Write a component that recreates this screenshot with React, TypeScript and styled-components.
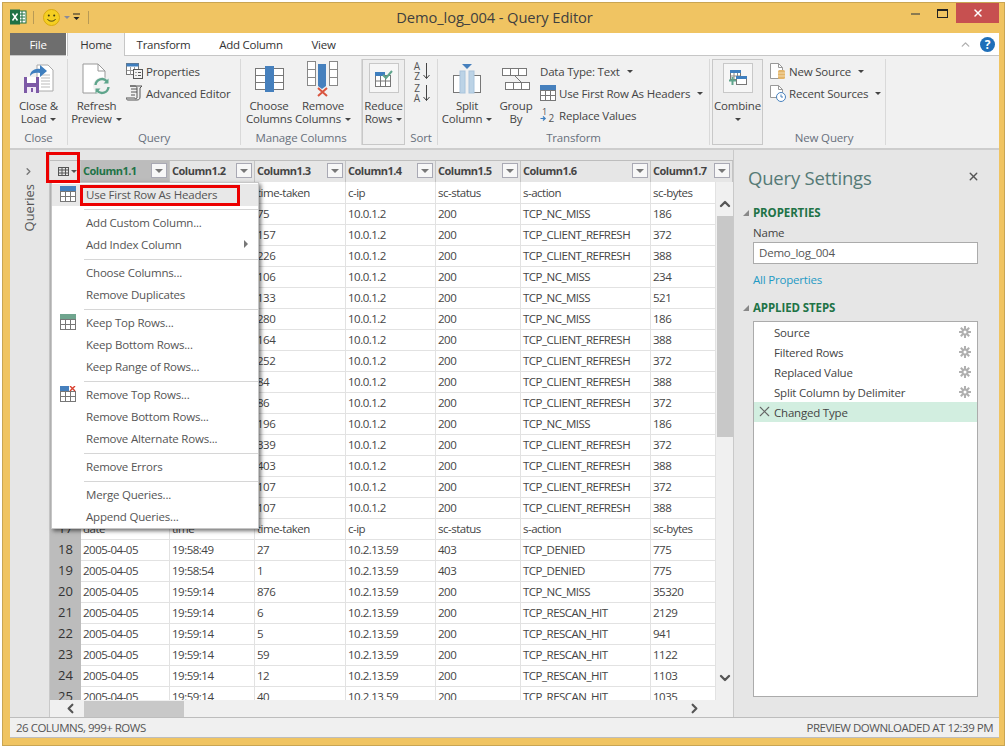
import React from "react"
import styled, { createGlobalStyle } from "styled-components"
import { ChevronUp, ChevronDown, ChevronLeft, ChevronRight, X } from "lucide-react"

const FONT = `"Open Sans", "Noto Sans", "Liberation Sans", sans-serif`

const GlobalStyle = createGlobalStyle`
  html, body { margin: 0; padding: 0; background: #fff; }
  body { font-family: ${FONT}; font-size: 11.5px; letter-spacing: -0.2px; color: #444; overflow: hidden; }
  * { box-sizing: border-box; }
`

/* ---------- frame ---------- */
const Window = styled.div`
  width: 1003px;
  height: 744px;
  margin: 2px 0 0 2px;
  padding: 0 5px 7px 7px;
  background: #f0c462;
  border: 1px solid #c9a553;
  display: flex;
  flex-direction: column;
`
const TitleBar = styled.div`
  height: 30px;
  flex: none;
  display: flex;
  align-items: flex-start;
  position: relative;
`
const QuickAccess = styled.div`
  display: flex;
  align-items: center;
  height: 30px;
  padding-bottom: 2px;
`
const QuickSep = styled.div`
  width: 1px;
  height: 13px;
  background: #b89a55;
  margin: 0 9px 0 6px;
`
const CustomizeSlot = styled.div`
  margin: 0 0 0 2px;
  line-height: 0;
`
const WindowTitle = styled.div`
  position: absolute;
  left: 0;
  right: 0;
  top: 4px;
  text-align: center;
  font-size: 14.7px;
  letter-spacing: -0.1px;
  color: #3f3f3f;
  padding-right: 20px;
`
const WindowButtons = styled.div`
  margin-left: auto;
  display: flex;
  align-items: center;
  height: 20px;
`
const CtrlButton = styled.div`
  width: 27px;
  height: 20px;
  display: flex;
  align-items: center;
  justify-content: center;
`
const CloseButton = styled.div`
  width: 43px;
  height: 20px;
  background: #c75050;
  color: #fff;
  display: flex;
  align-items: center;
  justify-content: center;
`

/* ---------- tabs ---------- */
const TabStrip = styled.div`
  height: 23px;
  flex: none;
  background: #fff;
  display: flex;
  align-items: stretch;
  position: relative;
  letter-spacing: -0.25px;
`
const FileTab = styled.div`
  width: 56px;
  background: #6e6e6e;
  color: #fff;
  display: flex;
  align-items: center;
  justify-content: center;
  border-bottom: 1px solid #c6c6c6;
  margin-right: 1px;
`
const Tab = styled.div<{ $active?: boolean; $w: number }>`
  width: ${p => p.$w}px;
  display: flex;
  align-items: center;
  justify-content: center;
  color: #333;
  border-bottom: ${p => (p.$active ? "none" : "1px solid #c6c6c6")};
  border-left: ${p => (p.$active ? "1px solid #c6c6c6" : "none")};
  border-right: ${p => (p.$active ? "1px solid #c6c6c6" : "none")};
  background: ${p => (p.$active ? "#f1f1f1" : "#fff")};
`
const TabFill = styled.div`
  flex: 1;
  border-bottom: 1px solid #c6c6c6;
  display: flex;
  align-items: center;
  justify-content: flex-end;
  padding-right: 4px;
  gap: 8px;
  color: #b0b0b0;
`
const HelpDot = styled.div`
  width: 15px;
  height: 15px;
  border-radius: 50%;
  background: #1f6fb9;
  color: #fff;
  font-weight: 700;
  font-size: 12px;
  line-height: 15px;
  text-align: center;
`

/* ---------- ribbon ---------- */
const Ribbon = styled.div`
  height: 94px;
  flex: none;
  background: #f1f1f1;
  border-bottom: 2px solid #cdcdcd;
  padding-top: 3px;
  display: flex;
  align-items: flex-start;
`
const Group = styled.div<{ $w: number; $outlined?: boolean; $ml?: number }>`
  width: ${p => p.$w}px;
  height: 86px;
  flex: none;
  margin-left: ${p => p.$ml ?? 0}px;
  display: flex;
  flex-direction: column;
  border-right: 1px solid ${p => (p.$outlined ? "#c8c8c8" : "#d9d9d9")};
  ${p => (p.$outlined ? "border-left: 1px solid #c8c8c8; border-top: 1px solid #c8c8c8; border-bottom: 1px solid #c8c8c8; background: #eeeeee;" : "")}
`
const GroupBody = styled.div`
  height: 73px;
  display: flex;
  align-items: flex-start;
`
const GroupLabel = styled.div`
  text-align: center;
  color: #68707c;
  line-height: 14px;
  margin-top: 1px;
  letter-spacing: -0.15px;
`
const LargeButton = styled.div<{ $w: number }>`
  width: ${p => p.$w}px;
  flex: none;
  display: flex;
  flex-direction: column;
  align-items: center;
  text-align: center;
  line-height: 13px;
  color: #444;
`
const LargeIcon = styled.div`
  height: 40px;
  display: flex;
  align-items: center;
  justify-content: center;
`
const IconBox = styled.div`
  width: 30px;
  height: 30px;
  margin-top: 3px;
  margin-bottom: 6px;
  border: 1px solid #c8c8c8;
  background: #f6f6f6;
  display: flex;
  align-items: center;
  justify-content: center;
`
const ButtonLabel = styled.div`
  white-space: nowrap;
  min-height: 13px;
`
const SmallColumn = styled.div<{ $gap?: number }>`
  display: flex;
  flex-direction: column;
  padding-top: 2px;
  margin-left: ${p => p.$gap ?? 0}px;
`
const SmallButton = styled.div`
  height: 22px;
  padding-bottom: 2px;
  display: flex;
  align-items: center;
  gap: 3px;
  white-space: nowrap;
  color: #444;
`
const SortColumn = styled.div`
  width: 100%;
  display: flex;
  flex-direction: column;
  align-items: center;
  padding-top: 3px;
  gap: 3px;
`
const SortButton = styled.div`
  width: 17px;
  height: 19px;
  display: flex;
  gap: 1px;
`
const SortLetters = styled.div`
  width: 9px;
  display: flex;
  flex-direction: column;
  align-items: center;
  font-size: 10px;
  line-height: 9.500px;
  letter-spacing: 0;
  color: #555;
`
const Caret = styled.span<{ $color?: string; $ml?: number; $va?: number }>`
  display: inline-block;
  width: 0;
  height: 0;
  margin-left: ${p => p.$ml ?? 4}px;
  vertical-align: ${p => p.$va ?? 2}px;
  border-left: 3.500px solid transparent;
  border-right: 3.500px solid transparent;
  border-top: 3.500px solid ${p => p.$color ?? "#444"};
`

/* ---------- main ---------- */
const Main = styled.div`
  flex: 1;
  min-height: 0;
  display: flex;
  background: #e6e6e6;
`
const Rail = styled.div`
  width: 40px;
  flex: none;
  display: flex;
  flex-direction: column;
  align-items: center;
  padding: 16px 2px 0 0;
  color: #777;
  border-right: 1px solid #c9c9c9;
`
const RailLabel = styled.div`
  writing-mode: vertical-rl;
  transform: rotate(180deg);
  margin-top: 7px;
  color: #555;
  font-size: 13px;
  letter-spacing: 0;
`
const GridArea = styled.div`
  width: 683px;
  flex: none;
  padding-top: 10px;
  position: relative;
  display: flex;
  flex-direction: column;
`
const COLUMNS = "31px 89px 85px 91px 90px 85px 130px"
const HeaderRow = styled.div`
  height: 22px;
  flex: none;
  display: grid;
  grid-template-columns: ${COLUMNS} 82px;
  border-top: 1px solid #bdbdbd;
  background: #e6e6e6;
`
const HeaderCell = styled.div<{ $selected?: boolean }>`
  display: flex;
  align-items: center;
  padding: 0 2px 2px 2px;
  font-weight: 700;
  font-size: 11px;
  letter-spacing: -0.5px;
  color: ${p => (p.$selected ? "#217346" : "#444")};
  background: ${p => (p.$selected ? "#bcbcbc" : "#e6e6e6")};
  border-right: 1px solid #c4c4c4;
`
const CornerCell = styled.div`
  display: flex;
  align-items: center;
  padding-left: 8px;
  gap: 1px;
  background: #e6e6e6;
  border-right: 1px solid #c4c4c4;
`
const FilterButton = styled.div`
  margin-left: auto;
  width: 16px;
  height: 15px;
  border: 1px solid #a9a9b4;
  background: #f7f7f7;
  display: flex;
  align-items: center;
  justify-content: center;
  flex: none;
`
const BodyRow = styled.div`
  flex: 1;
  min-height: 0;
  display: flex;
`
const Rows = styled.div`
  width: 666px;
  flex: none;
  overflow: hidden;
  background: #fff;
`
const Row = styled.div`
  height: 21px;
  display: grid;
  grid-template-columns: ${COLUMNS} 65px;
`
const RowNum = styled.div`
  background: #bcbcbc;
  color: #333;
  font-size: 13px;
  letter-spacing: 0;
  text-align: center;
  line-height: 21px;
  border-bottom: 1px solid #c4c4c4;
`
const Cell = styled.div`
  padding: 1px 0 0 2px;
  line-height: 19px;
  letter-spacing: -0.5px;
  white-space: nowrap;
  overflow: hidden;
  border-right: 1px solid #e2e2e2;
  border-bottom: 1px solid #e2e2e2;
`
const VScroll = styled.div`
  width: 17px;
  flex: none;
  background: #f0f0f0;
  display: flex;
  flex-direction: column;
  align-items: center;
  color: #555;
  padding-top: 14px;
`
const VThumb = styled.div`
  width: 16px;
  height: 221px;
  margin-top: 4px;
  margin-bottom: auto;
  background: #c8c8c8;
`
const ScrollEnd = styled.div`
  padding-bottom: 14px;
  line-height: 0;
`
const HScroll = styled.div`
  height: 17px;
  flex: none;
  background: #f0f0f0;
  display: flex;
  align-items: center;
  color: #555;
  padding-left: 13px;
  padding-right: 31px;
`
const HThumb = styled.div`
  width: 100px;
  height: 16px;
  margin-left: 6px;
  margin-right: auto;
  background: #c8c8c8;
`

/* ---------- context menu ---------- */
const Menu = styled.div`
  position: absolute;
  left: 1px;
  top: 32px;
  width: 208px;
  height: 347px;
  background: #fff;
  border: 1px solid #c6c6c6;
  box-shadow: 2px 2px 4px rgba(0, 0, 0, 0.55);
  padding-top: 1px;
  z-index: 2;
`
const MenuItem = styled.div<{ $hover?: boolean }>`
  height: 22px;
  padding-bottom: 2px;
  display: flex;
  align-items: center;
  color: #555;
  background: ${p => (p.$hover ? "#e8e8e8" : "transparent")};
`
const MenuIconSlot = styled.div`
  width: 34px;
  flex: none;
  display: flex;
  justify-content: center;
  padding-right: 3px;
`
const MenuArrow = styled.span`
  margin-left: auto;
  margin-right: 10px;
  width: 0;
  height: 0;
  border-top: 4px solid transparent;
  border-bottom: 4px solid transparent;
  border-left: 4px solid #777;
`
const MenuSep = styled.div`
  height: 1px;
  margin: 3px 0 2px 32px;
  background: #d6d6d6;
`
const RedBox = styled.div<{ $l: number; $t: number; $w: number; $h: number }>`
  position: absolute;
  left: ${p => p.$l}px;
  top: ${p => p.$t}px;
  width: ${p => p.$w}px;
  height: ${p => p.$h}px;
  border: 3px solid #ec0000;
  z-index: 3;
`

/* ---------- settings panel ---------- */
const Settings = styled.div`
  flex: 1;
  border-left: 1px solid #c9c9c9;
  padding: 0 21px 0 9px;
  position: relative;
  display: flex;
  flex-direction: column;
`
const SettingsTitle = styled.div`
  font-size: 18.500px;
  letter-spacing: -0.2px;
  color: #557a76;
  margin: 13px 0 0 5px;
  line-height: 30px;
  height: 41px;
`
const PanelClose = styled.div`
  position: absolute;
  right: 19px;
  top: 20px;
  color: #555;
  line-height: 0;
`
const SectionHead = styled.div<{ $mt?: number }>`
  display: flex;
  align-items: center;
  height: 17px;
  margin-top: ${p => p.$mt ?? 0}px;
  font-weight: 700;
  color: #217346;
  letter-spacing: -0.1px;
`
const SectionTri = styled.span`
  width: 10px;
  flex: none;
  &::before {
    content: "";
    display: block;
    width: 0;
    height: 0;
    border-left: 6px solid transparent;
    border-bottom: 6px solid #888;
  }
`
const FieldLabel = styled.div`
  margin: 3px 0 0 10px;
  line-height: 17px;
  color: #444;
`
const NameInput = styled.div`
  margin: 1px 0 0 10px;
  height: 22px;
  border: 1px solid #ababab;
  background: #fff;
  padding-left: 5px;
  line-height: 20px;
  color: #555;
`
const PropsLink = styled.div`
  margin: 7px 0 0 10px;
  line-height: 17px;
  color: #1f9ac4;
`
const StepList = styled.div`
  margin: 5px 0 20px 10px;
  flex: 1;
  border: 1px solid #ababab;
  background: #fff;
`
const Step = styled.div<{ $active?: boolean }>`
  height: 20px;
  display: flex;
  align-items: center;
  padding: 0 6px 0 20px;
  color: #444;
  position: relative;
  background: ${p => (p.$active ? "#d2eee0" : "transparent")};
`
const StepRemove = styled.span`
  position: absolute;
  left: 2px;
  top: 1px;
  line-height: 0;
  color: #666;
`
const StepGear = styled.span`
  margin-left: auto;
  line-height: 0;
`
const StatusBar = styled.div`
  height: 21px;
  flex: none;
  background: #f0f0f0;
  border-top: 1px solid #bdbdbd;
  border-bottom: 1px solid #bdbdbd;
  display: flex;
  align-items: center;
  justify-content: space-between;
  padding: 0 6px;
  letter-spacing: -0.5px;
  color: #555;
`

/* ---------- drawings ---------- */
const ExcelIcon = () => (
  <svg width="17" height="16" viewBox="0 0 17 16">
    <rect x="7" y="2" width="9" height="12" fill="#fff" stroke="#1e7145" />
    <path d="M9 5h6M9 8h6M9 11h6M12 2v12" stroke="#1e7145" />
    <rect x="0" y="0.5" width="10" height="15" fill="#1e7145" />
    <path d="M2.5 4.5l5 7M7.5 4.5l-5 7" stroke="#fff" strokeWidth="1.5" />
  </svg>
)
const Smiley = () => (
  <svg width="17" height="17" viewBox="0 0 17 17">
    <circle cx="8.5" cy="8.5" r="8" fill="#f5cf22" stroke="#d9a90e" />
    <circle cx="5.8" cy="6.5" r="1" fill="#3d3a10" />
    <circle cx="11.2" cy="6.5" r="1" fill="#3d3a10" />
    <path d="M4.5 10.2c1.6 2.6 6.4 2.6 8 0" stroke="#3d3a10" fill="none" />
  </svg>
)
const CustomizeIcon = () => (
  <svg width="10" height="10" viewBox="0 0 10 10">
    <path d="M1 2h7" stroke="#222" />
    <path d="M1.5 5h6L4.5 8z" fill="#222" />
  </svg>
)
const CloseLoadIcon = () => (
  <svg width="32" height="34" viewBox="0 0 32 34">
    <path d="M14 3h11l5 5v21H14z" fill="#fff" stroke="#aaa" />
    <path d="M18 13h9M18 16h9M18 19h9M18 22h9M18 25h9" stroke="#bbb" />
    <path d="M7 14c0-5 5-8 10-7V3l7 6-7 6v-4c-4-1-8 0-10 3z" fill="#3f7fbf" />
    <rect x="1" y="15" width="15" height="16" fill="#7d5aa6" />
    <rect x="4" y="15" width="9" height="6" fill="#fff" />
    <rect x="4" y="25" width="9" height="6" fill="#f1eaf6" />
    <rect x="8" y="26" width="2" height="4" fill="#7d5aa6" />
  </svg>
)
const RefreshIcon = () => (
  <svg width="29" height="32" viewBox="0 0 29 32">
    <path d="M1 1h15l7 7v22H1z" fill="#fff" stroke="#999" />
    <path d="M16 1v7h7" fill="none" stroke="#999" />
    <circle cx="20" cy="23" r="9" fill="#f1f1f1" />
    <path d="M13.5 22a6.5 6.5 0 0 1 11.5-3.5M26.5 24a6.5 6.5 0 0 1-11.5 3.5" fill="none" stroke="#5fa58c" strokeWidth="2.4" />
    <path d="M26.5 15.5v5h-5zM13.5 30.500v-5h5z" fill="#5fa58c" />
  </svg>
)
const PropertiesIcon = () => (
  <svg width="17" height="16" viewBox="0 0 17 16">
    <rect x="0.500" y="0.500" width="12" height="11" fill="#fff" stroke="#777" />
    <rect x="0.500" y="0.500" width="12" height="3" fill="#3f7fbf" />
    <path d="M4.500 4v8M8.500 4v8M1 7.500h11" stroke="#999" />
    <rect x="7.500" y="6.500" width="9" height="9" fill="#f4f4f4" stroke="#555" />
    <path d="M9.500 9.500h1M12 9.500h3M9.500 12.500h1M12 12.500h3" stroke="#555" />
  </svg>
)
const EditorIcon = () => (
  <svg width="17" height="16" viewBox="0 0 17 16">
    <path d="M4 1h12l-2 2v9c0 2-1 3-3 3H2c-1 0-2-1-2-2h9c0 1 1 1 2 0V3c0-1-1-2-2-2z" fill="#eee" stroke="#555" />
    <path d="M5 4h6M5 7h6M5 10h4" stroke="#555" />
  </svg>
)
const ChooseIcon = () => (
  <svg width="29" height="30" viewBox="0 0 29 30">
    <rect x="0.500" y="4.500" width="28" height="21" fill="#fff" stroke="#777" />
    <rect x="10" y="2" width="9" height="26" fill="#4680bd" />
    <path d="M1 11.500h9M19 11.500h9M1 18.500h9M19 18.500h9" stroke="#777" />
  </svg>
)
const RemoveColsIcon = () => (
  <svg width="32" height="37" viewBox="0 0 32 37">
    <g fill="#fff" stroke="#888">
      <rect x="0.500" y="0.500" width="8" height="8" />
      <rect x="0.500" y="8.500" width="8" height="8" />
      <rect x="0.500" y="16.500" width="8" height="8" />
      <rect x="22.500" y="0.500" width="8" height="8" />
      <rect x="22.500" y="8.500" width="8" height="8" />
      <rect x="22.500" y="16.500" width="8" height="8" />
    </g>
    <path d="M11 3h8v22l-4 3-4-3z" fill="#4680bd" />
    <path d="M11 27l9 8M20 27l-9 8" stroke="#d9553f" strokeWidth="2" />
  </svg>
)
const ReduceIcon = () => (
  <svg width="18" height="17" viewBox="0 0 18 17">
    <rect x="0.500" y="5.500" width="15" height="11" fill="#fff" stroke="#777" />
    <rect x="0" y="2" width="10" height="4" fill="#3f7fbf" />
    <path d="M5.500 6v10M10.500 6v10M1 11h15" stroke="#777" />
    <path d="M8 5l3 3 6-7" fill="none" stroke="#5fa58c" strokeWidth="2" />
  </svg>
)
const SortArrow = () => (
  <svg width="7" height="18" viewBox="0 0 7 18">
    <path d="M3.500 1v15.500M0.500 13l3 3.500 3-3.500" fill="none" stroke="#444" />
  </svg>
)
const SplitIcon = () => (
  <svg width="28" height="30" viewBox="0 0 28 30">
    <rect x="0.500" y="11.500" width="27" height="17" fill="#fff" stroke="#777" />
    <rect x="7" y="7" width="14" height="22" fill="#f1f1f1" />
    <rect x="7" y="7" width="5" height="22" fill="#bcd3e6" stroke="#a9c4dc" />
    <rect x="16" y="7" width="5" height="22" fill="#bcd3e6" stroke="#a9c4dc" />
    <path d="M9 0h10l-5 5z" fill="#4680bd" />
  </svg>
)
const GroupByIcon = () => (
  <svg width="28" height="23" viewBox="0 0 28 23">
    <g fill="#fff" stroke="#777">
      <rect x="0.500" y="0.500" width="8" height="7" />
      <rect x="8.500" y="0.500" width="8" height="7" />
      <rect x="16.500" y="0.500" width="8" height="7" />
      <rect x="3.500" y="14.500" width="8" height="7" />
      <rect x="11.500" y="14.500" width="8" height="7" />
      <rect x="19.500" y="14.500" width="8" height="7" />
    </g>
    <path d="M13 8l6 6" stroke="#777" />
  </svg>
)
const HeaderTable = ({ color = "#4680bd", x }: { color?: string; x?: boolean }) => (
  <svg width="16" height="16" viewBox="0 0 16 16">
    <rect x="0" y="0" width={x ? 9 : 16} height="5" fill={color} />
    <rect x="0.500" y="5.500" width="15" height="10" fill="#fff" stroke="#777" />
    <path d="M5.500 5v10M10.500 5v10M1 10.500h14" stroke="#777" />
    {x && <path d="M10 0l5 5M15 0l-5 5" stroke="#d9402f" strokeWidth="1.400" />}
  </svg>
)
const ReplaceIcon = () => (
  <svg width="16" height="16" viewBox="0 0 16 16">
    <text x="2" y="8" fontSize="9" fill="#555" fontFamily={FONT}>1</text>
    <text x="8.500" y="15" fontSize="10" fill="#555" fontFamily={FONT}>2</text>
    <path d="M0.500 11.500h4.500M3 9.500l2.200 2-2.200 2" fill="none" stroke="#3f7fbf" strokeWidth="1.200" />
  </svg>
)
const CombineIcon = () => (
  <svg width="18" height="16" viewBox="0 0 18 16">
    <rect x="1.500" y="0.500" width="10" height="9" fill="#fff" stroke="#777" />
    <rect x="1" y="0" width="11" height="3" fill="#3f7fbf" />
    <path d="M5 3v6M8.500 3v6M2 6h9" stroke="#888" />
    <rect x="7.500" y="6.500" width="10" height="8" fill="#fff" stroke="#777" />
    <rect x="7" y="6" width="11" height="3" fill="#3f7fbf" />
    <path d="M0 10.500h7M3.500 7v8" stroke="#5fa58c" strokeWidth="2" />
  </svg>
)
const NewSourceIcon = () => (
  <svg width="16" height="17" viewBox="0 0 16 17">
    <path d="M0.500 0.500h8l4 4v11H0.500z" fill="#fff" stroke="#999" />
    <path d="M8.500 0.500v4h4" fill="none" stroke="#999" />
    <rect x="8" y="7" width="7" height="9" rx="1.500" fill="#e3b468" />
    <path d="M8 10h7M8 13h7" stroke="#f4dcb0" />
  </svg>
)
const RecentIcon = () => (
  <svg width="16" height="17" viewBox="0 0 16 17">
    <path d="M0.500 0.500h8l4 4v8H0.500z" fill="#fff" stroke="#999" />
    <path d="M8.500 0.500v4h4" fill="none" stroke="#999" />
    <circle cx="11" cy="12" r="4.500" fill="#fff" stroke="#4680bd" />
    <path d="M11 9.500V12h2" fill="none" stroke="#4680bd" />
  </svg>
)
const TableGlyph = () => (
  <svg width="11" height="9" viewBox="0 0 11 9">
    <rect x="0.500" y="0.500" width="10" height="8" fill="none" stroke="#555" />
    <path d="M0 3h11M0 6h11M4 0v9M7.500 0v9" stroke="#555" />
  </svg>
)
const FilterTri = () => (
  <svg width="8" height="4" viewBox="0 0 8 4">
    <path d="M0 0h8L4 4z" fill="#777" />
  </svg>
)
const Gear = () => (
  <svg width="12" height="12" viewBox="0 0 12 12">
    <path d="M6 0v12M0 6h12M1.800 1.800l8.400 8.400M10.200 1.800l-8.400 8.400" stroke="#b0b0b0" strokeWidth="2" />
    <circle cx="6" cy="6" r="3.500" fill="#b0b0b0" />
    <circle cx="6" cy="6" r="1.500" fill="#fff" />
  </svg>
)

/* ---------- data ---------- */
const REFRESH = "TCP_CLIENT_REFRESH"
const MISS = "TCP_NC_MISS"
const RESCAN = "TCP_RESCAN_HIT"
const D = "2005-04-05"
const IP1 = "10.0.1.2"
const IP2 = "10.2.13.59"

type R = [string, string, string, string, string, string, string]
const rows: R[] = [
  ["", "", "time-taken", "c-ip", "sc-status", "s-action", "sc-bytes"],
  ["", "", "75", IP1, "200", MISS, "186"],
  ["", "", "157", IP1, "200", REFRESH, "372"],
  ["", "", "226", IP1, "200", REFRESH, "388"],
  ["", "", "106", IP1, "200", MISS, "234"],
  ["", "", "133", IP1, "200", MISS, "521"],
  ["", "", "280", IP1, "200", MISS, "186"],
  ["", "", "164", IP1, "200", REFRESH, "388"],
  ["", "", "252", IP1, "200", REFRESH, "372"],
  ["", "", "84", IP1, "200", REFRESH, "388"],
  ["", "", "86", IP1, "200", REFRESH, "372"],
  ["", "", "196", IP1, "200", MISS, "186"],
  ["", "", "339", IP1, "200", REFRESH, "372"],
  ["", "", "403", IP1, "200", REFRESH, "388"],
  ["", "", "107", IP1, "200", REFRESH, "372"],
  ["", "", "107", IP1, "200", REFRESH, "388"],
  ["date", "time", "time-taken", "c-ip", "sc-status", "s-action", "sc-bytes"],
  [D, "19:58:49", "27", IP2, "403", "TCP_DENIED", "775"],
  [D, "19:58:54", "1", IP2, "403", "TCP_DENIED", "775"],
  [D, "19:59:14", "876", IP2, "200", MISS, "35320"],
  [D, "19:59:14", "6", IP2, "200", RESCAN, "2129"],
  [D, "19:59:14", "5", IP2, "200", RESCAN, "941"],
  [D, "19:59:14", "59", IP2, "200", RESCAN, "1122"],
  [D, "19:59:14", "12", IP2, "200", RESCAN, "1103"],
  [D, "19:59:14", "40", IP2, "200", RESCAN, "1035"],
]
const columns = ["Column1.1", "Column1.2", "Column1.3", "Column1.4", "Column1.5", "Column1.6", "Column1.7"]
const steps = ["Source", "Filtered Rows", "Replaced Value", "Split Column by Delimiter"]

export default function App() {
  return (
    <Window>
      <GlobalStyle />
      <TitleBar>
        <QuickAccess>
          <ExcelIcon />
          <QuickSep />
          <Smiley />
          <Caret $color="#8a8a9a" />
          <CustomizeSlot><CustomizeIcon /></CustomizeSlot>
          <QuickSep />
        </QuickAccess>
        <WindowTitle>Demo_log_004 - Query Editor</WindowTitle>
        <WindowButtons>
          <CtrlButton>
            <svg width="9" height="3" viewBox="0 0 9 3"><rect width="9" height="2" y="1" fill="#8a7a50" /></svg>
          </CtrlButton>
          <CtrlButton>
            <svg width="11" height="9" viewBox="0 0 11 9"><rect x="0.500" y="0.500" width="10" height="8" fill="none" stroke="#222" /><rect width="11" height="2" fill="#222" /></svg>
          </CtrlButton>
          <CloseButton><X size={12} strokeWidth={3} /></CloseButton>
        </WindowButtons>
      </TitleBar>

      <TabStrip>
        <FileTab>File</FileTab>
        <Tab $active $w={58}>Home</Tab>
        <Tab $w={77}>Transform</Tab>
        <Tab $w={98}>Add Column</Tab>
        <Tab $w={47}>View</Tab>
        <TabFill>
          <ChevronUp size={13} strokeWidth={2.5} />
          <HelpDot>?</HelpDot>
        </TabFill>
      </TabStrip>

      <Ribbon>
        <Group $w={58}>
          <GroupBody>
            <LargeButton $w={57}>
              <LargeIcon><CloseLoadIcon /></LargeIcon>
              <ButtonLabel>Close &amp;</ButtonLabel>
              <ButtonLabel>Load<Caret /></ButtonLabel>
            </LargeButton>
          </GroupBody>
          <GroupLabel>Close</GroupLabel>
        </Group>
        <Group $w={173}>
          <GroupBody>
            <LargeButton $w={57}>
              <LargeIcon><RefreshIcon /></LargeIcon>
              <ButtonLabel>Refresh</ButtonLabel>
              <ButtonLabel>Preview<Caret /></ButtonLabel>
            </LargeButton>
            <SmallColumn $gap={1}>
              <SmallButton><PropertiesIcon />Properties</SmallButton>
              <SmallButton><EditorIcon />Advanced Editor</SmallButton>
            </SmallColumn>
          </GroupBody>
          <GroupLabel>Query</GroupLabel>
        </Group>
        <Group $w={121}>
          <GroupBody>
            <LargeButton $w={56}>
              <LargeIcon><ChooseIcon /></LargeIcon>
              <ButtonLabel>Choose</ButtonLabel>
              <ButtonLabel>Columns</ButtonLabel>
            </LargeButton>
            <LargeButton $w={52}>
              <LargeIcon><RemoveColsIcon /></LargeIcon>
              <ButtonLabel>Remove</ButtonLabel>
              <ButtonLabel>Columns<Caret /></ButtonLabel>
            </LargeButton>
          </GroupBody>
          <GroupLabel>Manage Columns</GroupLabel>
        </Group>
        <Group $w={43} $outlined>
          <GroupBody>
            <LargeButton $w={41}>
              <IconBox><ReduceIcon /></IconBox>
              <ButtonLabel>Reduce</ButtonLabel>
              <ButtonLabel>Rows<Caret /></ButtonLabel>
            </LargeButton>
          </GroupBody>
        </Group>
        <Group $w={33}>
          <GroupBody>
            <SortColumn>
              <SortButton>
                <SortLetters><span>A</span><span>Z</span></SortLetters>
                <SortArrow />
              </SortButton>
              <SortButton>
                <SortLetters><span>Z</span><span>A</span></SortLetters>
                <SortArrow />
              </SortButton>
            </SortColumn>
          </GroupBody>
          <GroupLabel>Sort</GroupLabel>
        </Group>
        <Group $w={272}>
          <GroupBody>
            <LargeButton $w={58}>
              <LargeIcon><SplitIcon /></LargeIcon>
              <ButtonLabel>Split</ButtonLabel>
              <ButtonLabel>Column<Caret /></ButtonLabel>
            </LargeButton>
            <LargeButton $w={40}>
              <LargeIcon><GroupByIcon /></LargeIcon>
              <ButtonLabel>Group</ButtonLabel>
              <ButtonLabel>By</ButtonLabel>
            </LargeButton>
            <SmallColumn $gap={4}>
              <SmallButton>Data Type: Text<Caret /></SmallButton>
              <SmallButton><HeaderTable />Use First Row As Headers<Caret /></SmallButton>
              <SmallButton><ReplaceIcon />Replace Values</SmallButton>
            </SmallColumn>
          </GroupBody>
          <GroupLabel>Transform</GroupLabel>
        </Group>
        <Group $w={51} $outlined $ml={2}>
          <GroupBody>
            <LargeButton $w={49}>
              <IconBox><CombineIcon /></IconBox>
              <ButtonLabel>Combine</ButtonLabel>
              <ButtonLabel><Caret $ml={0} /></ButtonLabel>
            </LargeButton>
          </GroupBody>
        </Group>
        <Group $w={123}>
          <GroupBody>
            <SmallColumn $gap={7}>
              <SmallButton><NewSourceIcon />New Source<Caret /></SmallButton>
              <SmallButton><RecentIcon />Recent Sources<Caret /></SmallButton>
            </SmallColumn>
          </GroupBody>
          <GroupLabel>New Query</GroupLabel>
        </Group>
      </Ribbon>

      <Main>
        <Rail>
          <ChevronRight size={11} strokeWidth={3} />
          <RailLabel>Queries</RailLabel>
        </Rail>
        <GridArea>
          <HeaderRow>
            <CornerCell><TableGlyph /><Caret $color="#555" $ml={1} $va={0} /></CornerCell>
            {columns.map((c, i) => (
              <HeaderCell key={c} $selected={i === 0}>
                {c}
                <FilterButton><FilterTri /></FilterButton>
              </HeaderCell>
            ))}
          </HeaderRow>
          <BodyRow>
            <Rows>
              {rows.map((r, i) => (
                <Row key={i}>
                  <RowNum>{i + 1}</RowNum>
                  {r.map((v, j) => <Cell key={j}>{v}</Cell>)}
                </Row>
              ))}
            </Rows>
            <VScroll>
              <ChevronUp size={16} strokeWidth={3.5} />
              <VThumb />
              <ScrollEnd><ChevronDown size={16} strokeWidth={3.5} /></ScrollEnd>
            </VScroll>
          </BodyRow>
          <HScroll>
            <ChevronLeft size={15} strokeWidth={3.5} />
            <HThumb />
            <ChevronRight size={15} strokeWidth={3.5} />
          </HScroll>

          <Menu>
            <MenuItem $hover><MenuIconSlot><HeaderTable /></MenuIconSlot>Use First Row As Headers</MenuItem>
            <MenuSep />
            <MenuItem><MenuIconSlot />Add Custom Column...</MenuItem>
            <MenuItem><MenuIconSlot />Add Index Column<MenuArrow /></MenuItem>
            <MenuSep />
            <MenuItem><MenuIconSlot />Choose Columns...</MenuItem>
            <MenuItem><MenuIconSlot />Remove Duplicates</MenuItem>
            <MenuSep />
            <MenuItem><MenuIconSlot><HeaderTable color="#6fa58e" /></MenuIconSlot>Keep Top Rows...</MenuItem>
            <MenuItem><MenuIconSlot />Keep Bottom Rows...</MenuItem>
            <MenuItem><MenuIconSlot />Keep Range of Rows...</MenuItem>
            <MenuSep />
            <MenuItem><MenuIconSlot><HeaderTable x /></MenuIconSlot>Remove Top Rows...</MenuItem>
            <MenuItem><MenuIconSlot />Remove Bottom Rows...</MenuItem>
            <MenuItem><MenuIconSlot />Remove Alternate Rows...</MenuItem>
            <MenuSep />
            <MenuItem><MenuIconSlot />Remove Errors</MenuItem>
            <MenuSep />
            <MenuItem><MenuIconSlot />Merge Queries...</MenuItem>
            <MenuItem><MenuIconSlot />Append Queries...</MenuItem>
          </Menu>
          <RedBox $l={-4} $t={2} $w={34} $h={31} />
          <RedBox $l={30} $t={35} $w={160} $h={21} />
        </GridArea>

        <Settings>
          <SettingsTitle>Query Settings</SettingsTitle>
          <PanelClose><X size={13} strokeWidth={2.5} /></PanelClose>
          <SectionHead><SectionTri />PROPERTIES</SectionHead>
          <FieldLabel>Name</FieldLabel>
          <NameInput>Demo_log_004</NameInput>
          <PropsLink>All Properties</PropsLink>
          <SectionHead $mt={11}><SectionTri />APPLIED STEPS</SectionHead>
          <StepList>
            {steps.map(s => (
              <Step key={s}>{s}<StepGear><Gear /></StepGear></Step>
            ))}
            <Step $active><StepRemove><X size={17} strokeWidth={1.5} /></StepRemove>Changed Type</Step>
          </StepList>
        </Settings>
      </Main>

      <StatusBar>
        <span>26 COLUMNS, 999+ ROWS</span>
        <span>PREVIEW DOWNLOADED AT 12:39 PM</span>
      </StatusBar>
    </Window>
  )
}
